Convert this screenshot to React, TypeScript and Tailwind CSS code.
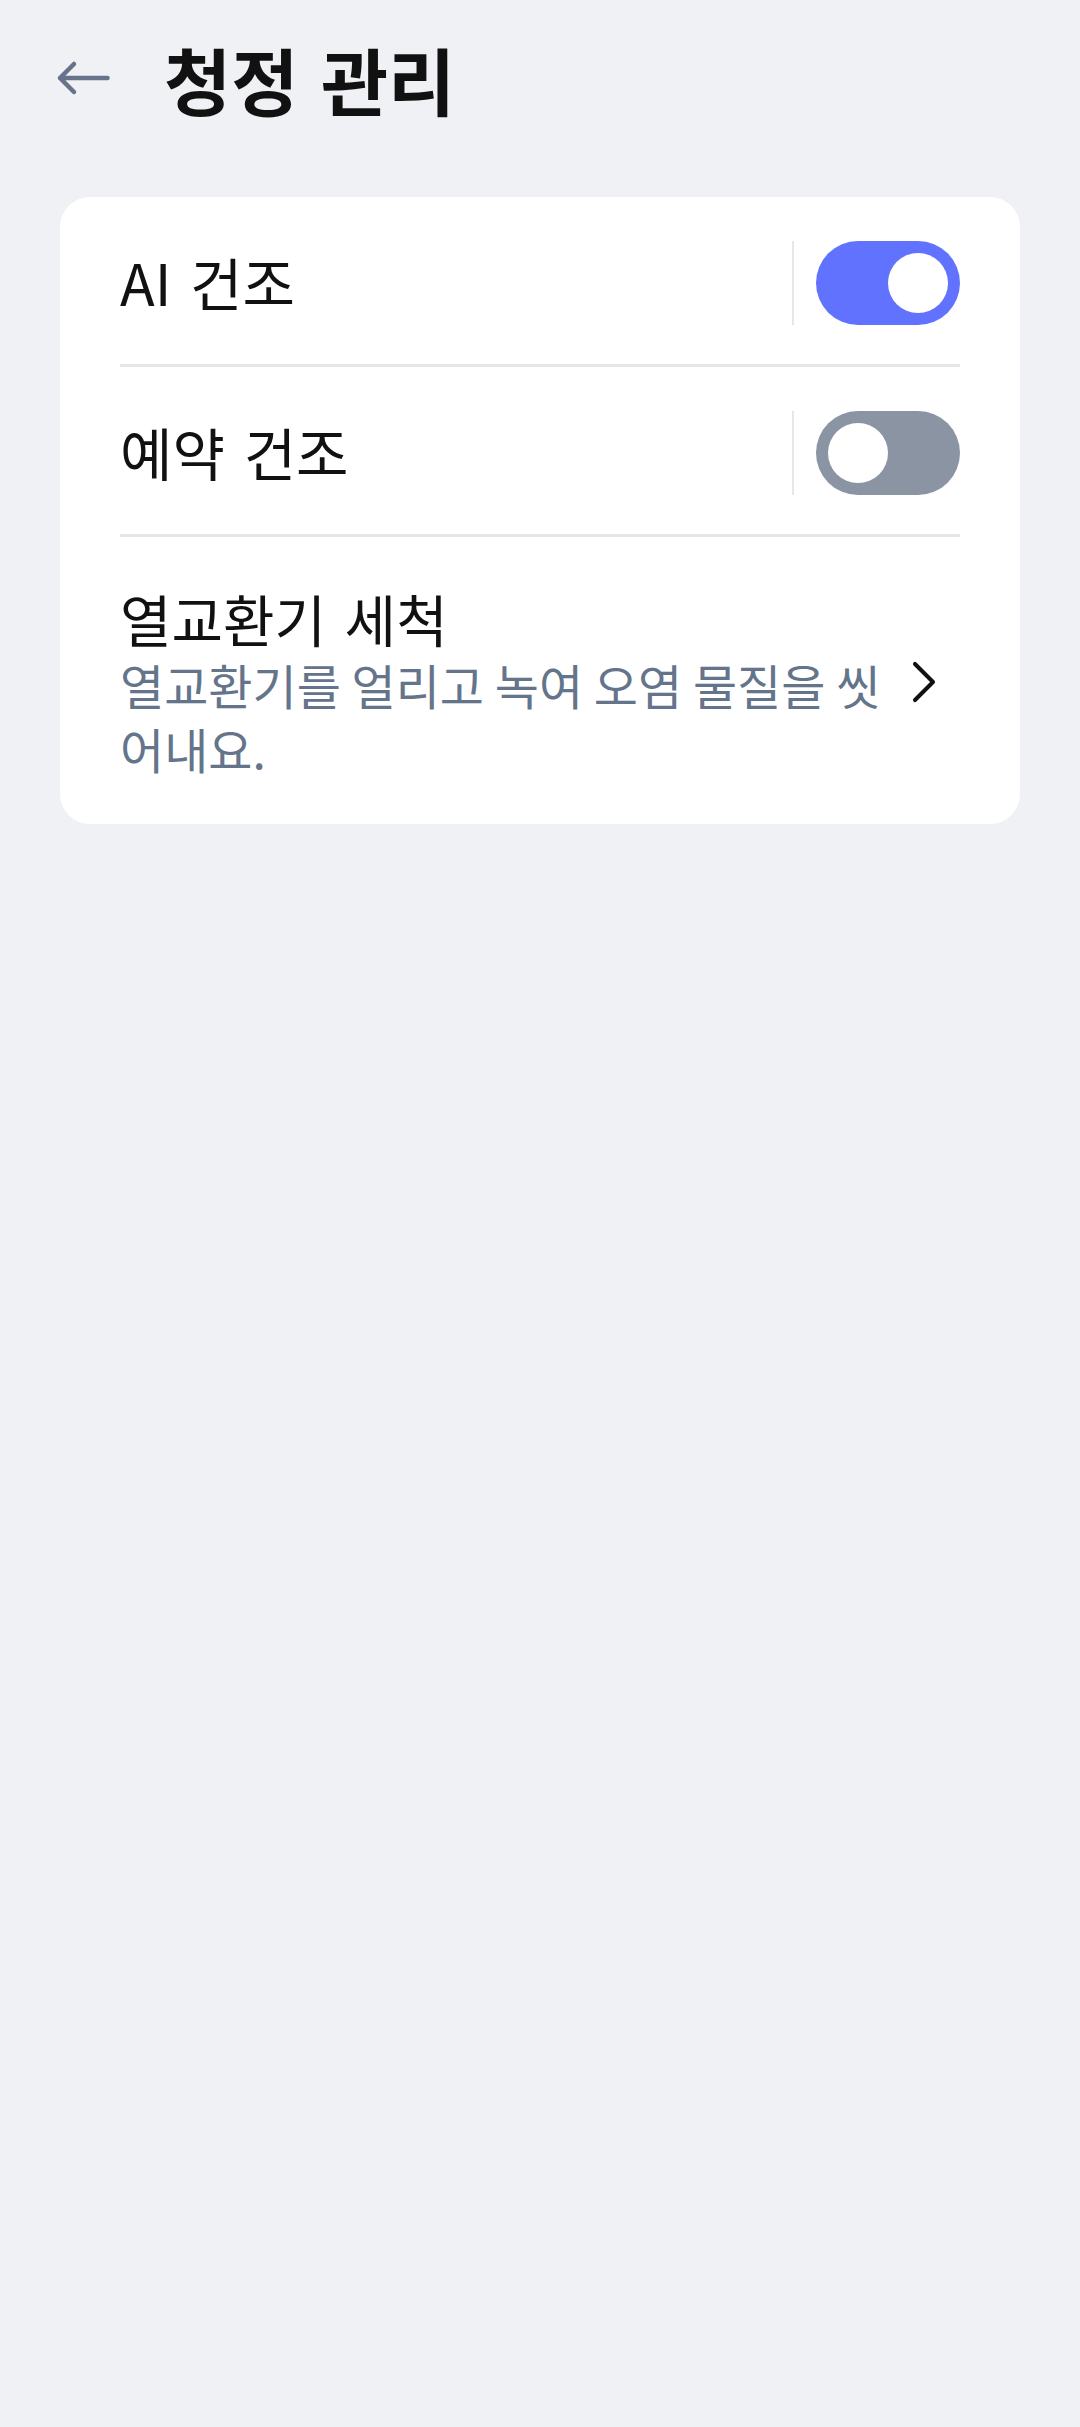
import { useState } from "react";

function Toggle({ on, onClick }: { on: boolean; onClick: () => void }) {
  return (
    <button
      onClick={onClick}
      className={`flex h-[84px] w-[144px] shrink-0 items-center rounded-full p-[12px] ${
        on ? "justify-end bg-[#6173fe]" : "justify-start bg-[#8b94a3]"
      }`}
    >
      <span className="block h-[60px] w-[60px] rounded-full bg-white" />
    </button>
  );
}

function ToggleRow({ label, on, onClick }: { label: string; on: boolean; onClick: () => void }) {
  return (
    <>
      <div className="flex items-center px-[60px] pt-[44px] pb-[39px]">
        <div className="-mt-[4px] flex-1 text-[57px] leading-[70px] text-[#111111] [word-spacing:6px]">{label}</div>
        <div className="mr-[22px] h-[84px] w-[2px] bg-[#e5e7eb]" />
        <Toggle on={on} onClick={onClick} />
      </div>
      <div className="mx-[60px] h-[3px] bg-[#e4e6ea]" />
    </>
  );
}

export default function App() {
  const [aiDry, setAiDry] = useState(true);
  const [reserveDry, setReserveDry] = useState(false);

  return (
    <div className="min-h-[2427px] bg-[#eff1f5] font-['Noto_Sans_CJK_KR','Noto_Sans',sans-serif]">
      {/* Header */}
      <div className="flex h-[156px] items-center pl-[56px]">
        <button className="shrink-0">
          <svg width="56" height="36" viewBox="0 0 56 36" fill="none">
            <path
              d="M18 4 L4 18 L18 32 M4 18 H51.5"
              stroke="#66738a"
              strokeWidth="4.5"
              strokeLinecap="round"
              strokeLinejoin="round"
            />
          </svg>
        </button>
        <h1 className="ml-[52px] text-[73px] font-bold leading-none text-[#111111] [word-spacing:6px]">청정 관리</h1>
      </div>

      {/* Card */}
      <div className="mx-[60px] mt-[41px] rounded-[30px] bg-white">
        <ToggleRow label="AI 건조" on={aiDry} onClick={() => setAiDry(!aiDry)} />
        <ToggleRow label="예약 건조" on={reserveDry} onClick={() => setReserveDry(!reserveDry)} />

        <div className="flex items-center px-[60px] pt-[47px] pb-[44px]">
          <div className="min-w-0 flex-1">
            <div className="text-[56px] leading-[68px] text-[#111111] [word-spacing:6px]">열교환기 세척</div>
            <div className="text-[48px] leading-[64px] text-[#64748b]">
              열교환기를 얼리고 녹여 오염 물질을 씻어내요.
            </div>
          </div>
          <svg width="72" height="72" viewBox="0 0 24 24" fill="none" className="shrink-0">
            <path d="m9 18 6-6-6-6" stroke="#111111" strokeWidth="1.35" strokeLinecap="round" strokeLinejoin="round" />
          </svg>
        </div>
      </div>
    </div>
  );
}
